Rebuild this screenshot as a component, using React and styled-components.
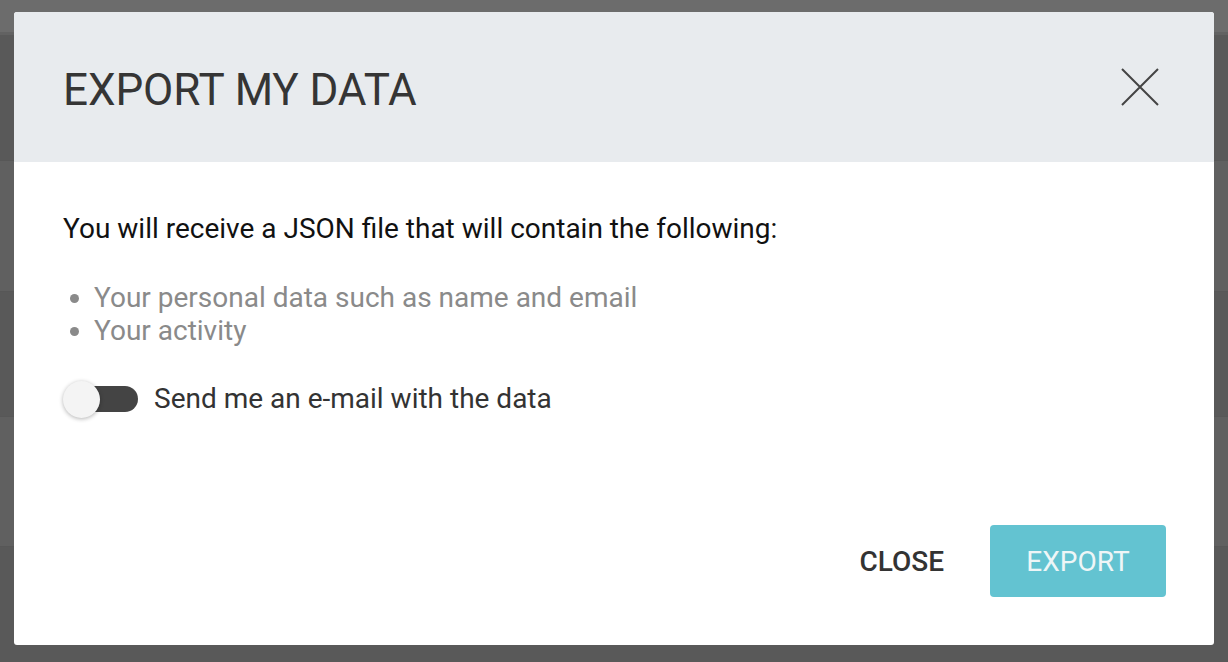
import React, { useState } from 'react';
import styled, { createGlobalStyle } from 'styled-components';

const GlobalStyle = createGlobalStyle`
  html, body {
    margin: 0;
    padding: 0;
    background: #5d5d5d;
    font-family: Roboto, "Liberation Sans", Arial, sans-serif;
  }
  * { box-sizing: border-box; }
`;

// page behind the dimmed backdrop
const Page = styled.div`
  position: relative;
  width: 1228px;
  height: 662px;
  overflow: hidden;
  background: #5c5c5c;
`;

const PageTopBar = styled.div`
  height: 35px;
  background: #6c6c6c;
  border-bottom: 3px solid #626262;
`;

const PageRow = styled.div`
  height: ${(p) => p.$h}px;
  background: ${(p) => (p.$light ? '#606060' : '#595959')};
  border-bottom: 1px solid #575757;
`;

const Overlay = styled.div`
  position: absolute;
  inset: 0;
  padding: 12px 14px 17px 14px;
`;

const Modal = styled.div`
  width: 1200px;
  height: 633px;
  background: #fff;
  border-radius: 3px;
  overflow: hidden;
  display: flex;
  flex-direction: column;
`;

const Header = styled.div`
  height: 150px;
  background: #e8ebee;
  padding: 0 48px 0 49px;
  display: flex;
  align-items: center;
  justify-content: space-between;
`;

const Title = styled.h1`
  margin: 6px 0 0 0;
  font-size: 44px;
  font-weight: 400;
  color: #353535;
  letter-spacing: -0.1px;
`;

const CloseIcon = styled.button`
  width: 44px;
  height: 44px;
  border: 0;
  padding: 0;
  background: transparent;
  display: flex;
  align-items: center;
  justify-content: center;
  margin-right: 4px;
  margin-top: 0;
  cursor: pointer;
`;

const Body = styled.div`
  flex: 1;
  padding: 50px 48px 48px 49px;
  display: flex;
  flex-direction: column;
`;

const Lead = styled.p`
  margin: 0;
  font-size: 28px;
  line-height: 33px;
  color: #111;
`;

const List = styled.ul`
  margin: 36px 0 0 0;
  padding: 0 0 0 31px;
  font-size: 28px;
  line-height: 33px;
  color: #8a8a8a;
`;

const ToggleRow = styled.label`
  margin-top: 33px;
  display: flex;
  align-items: center;
  gap: 16px;
  font-size: 28px;
  line-height: 37px;
  color: #333;
  cursor: pointer;
`;

const Track = styled.span`
  position: relative;
  width: 75px;
  height: 26px;
  display: inline-flex;
  align-items: center;

  &::before {
    content: '';
    position: absolute;
    left: 19px;
    right: 0;
    top: 0;
    bottom: 0;
    border-radius: 13px;
    background: ${(p) => (p.$on ? '#63c3d1' : '#444')};
  }
`;

const Knob = styled.span`
  position: absolute;
  top: 50%;
  left: ${(p) => (p.$on ? '39px' : '0')};
  width: 37px;
  height: 37px;
  margin-top: -18px;
  border-radius: 50%;
  background: #f4f4f4;
  box-shadow: 0 1px 4px rgba(0, 0, 0, 0.3);
`;

const Footer = styled.div`
  margin-top: auto;
  display: flex;
  justify-content: flex-end;
  align-items: center;
  gap: 30px;
`;

const TextButton = styled.button`
  border: 0;
  background: transparent;
  font-family: inherit;
  font-size: 28px;
  font-weight: 500;
  color: #333;
  padding: 0 16px;
  height: 72px;
  cursor: pointer;
`;

const PrimaryButton = styled.button`
  border: 0;
  border-radius: 4px;
  background: #63c3d1;
  color: #eef6f7;
  font-family: inherit;
  font-size: 28px;
  font-weight: 400;
  width: 176px;
  height: 72px;
  cursor: pointer;
`;

const rows = [
  { h: 126, light: false },
  { h: 131, light: true },
  { h: 125, light: false },
  { h: 130, light: true },
  { h: 120, light: false },
];

export default function App() {
  const [sendMail, setSendMail] = useState(false);

  return (
    <>
      <GlobalStyle />
      <Page>
        <PageTopBar />
        {rows.map((r, i) => (
          <PageRow key={i} $h={r.h} $light={r.light} />
        ))}
        <Overlay>
          <Modal>
            <Header>
              <Title>EXPORT MY DATA</Title>
              <CloseIcon aria-label="Close">
                <svg width="38" height="38" viewBox="0 0 38 38">
                  <path d="M1 1 L37 37 M37 1 L1 37" stroke="#444" strokeWidth="2" fill="none" />
                </svg>
              </CloseIcon>
            </Header>
            <Body>
              <Lead>You will receive a JSON file that will contain the following:</Lead>
              <List>
                <li>Your personal data such as name and email</li>
                <li>Your activity</li>
              </List>
              <ToggleRow onClick={() => setSendMail((v) => !v)}>
                <Track $on={sendMail}>
                  <Knob $on={sendMail} />
                </Track>
                Send me an e-mail with the data
              </ToggleRow>
              <Footer>
                <TextButton>CLOSE</TextButton>
                <PrimaryButton>EXPORT</PrimaryButton>
              </Footer>
            </Body>
          </Modal>
        </Overlay>
      </Page>
    </>
  );
}
